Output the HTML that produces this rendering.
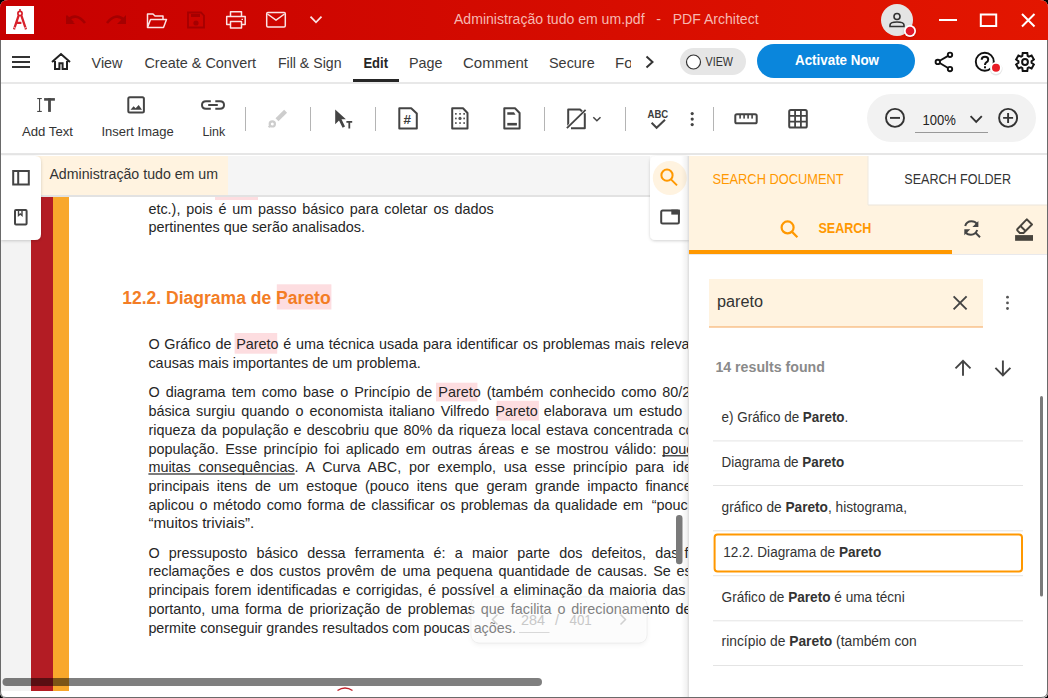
<!DOCTYPE html>
<html><head><meta charset="utf-8">
<style>
html,body{margin:0;padding:0;width:1048px;height:698px;overflow:hidden;background:#000;}
svg{display:block;}
text{font-family:"Liberation Sans",sans-serif;}
.ui{fill:#333;}
.doc{fill:#262626;font-size:15px;}
</style></head><body>
<svg width="1048" height="698" viewBox="0 0 1048 698">
<defs>
<linearGradient id="tg" x1="0" x2="1" y1="0" y2="0">
<stop offset="0" stop-color="#C60000"/><stop offset="1" stop-color="#E31600"/>
</linearGradient>
<linearGradient id="lsh" x1="0" x2="1" y1="0" y2="0"><stop offset="0" stop-color="#000" stop-opacity="0"/><stop offset="0.7" stop-color="#000" stop-opacity="0.05"/><stop offset="1" stop-color="#000" stop-opacity="0.14"/></linearGradient>
<clipPath id="win"><path d="M8 0H1040Q1048 0 1048 8V692Q1048 698 1042 698H6Q0 698 0 692V8Q0 0 8 0Z"/></clipPath>
<clipPath id="docclip"><rect x="1" y="196" width="687" height="495"/></clipPath>
<filter id="sh2" x="-20%" y="-30%" width="140%" height="170%"><feDropShadow dx="0" dy="2" stdDeviation="2" flood-color="#000" flood-opacity="0.12"/></filter>
<filter id="sh" x="-20%" y="-20%" width="140%" height="140%"><feDropShadow dx="0" dy="1" stdDeviation="1.5" flood-color="#000" flood-opacity="0.18"/></filter>
</defs>
<g clip-path="url(#win)">
<!-- window bg -->
<rect x="0" y="0" width="1048" height="698" fill="#fff"/>
<!-- TITLE BAR -->
<rect x="0" y="0" width="1048" height="40" fill="url(#tg)"/>
<rect x="6" y="6" width="28" height="28" fill="#fff"/>
<!-- logo compass -->
<rect x="19.2" y="9" width="1.6" height="2.5" fill="#D8202A"/>
<circle cx="20" cy="13.4" r="2.1" fill="none" stroke="#D8202A" stroke-width="1.7"/>
<path d="M18.6 15.6L14 29.4M21.4 15.6L26 29.4M17.2 22.8H21.4" fill="none" stroke="#D8202A" stroke-width="2.3"/>
<path d="M13.6 27.4L16.2 28.3M26.4 27.4L23.8 28.3" stroke="#fff" stroke-width="0.7"/>
<!-- undo redo -->
<g fill="none" stroke="#A50000" stroke-width="2.6">
<path d="M68 20Q76 12 85 23"/><path d="M67 15V22H74" stroke-width="0" fill="#A50000"/>
<path d="M66 15L66 24L75 24Z" fill="#A50000" stroke="none"/>
<path d="M124 20Q116 12 107 23"/>
<path d="M126 15L126 24L117 24Z" fill="#A50000" stroke="none"/>
</g>
<!-- folder -->
<path d="M147.5 27.5V14H153L155 16H163V19.5M147.5 27.5L150.5 19.5H166.5L163.5 27.5Z" fill="none" stroke="#FBE3E3" stroke-width="1.5" stroke-linejoin="round"/>
<!-- save disabled -->
<g fill="none" stroke="#A50000" stroke-width="1.8"><path d="M188 12.5H201L204 15.5V27.5H188Z"/></g>
<rect x="191" y="14" width="9" height="3" fill="#A50000"/><circle cx="196" cy="23" r="2.6" fill="#A50000"/>
<!-- print -->
<g fill="none" stroke="#FBE3E3" stroke-width="1.5" stroke-linejoin="round">
<path d="M230.5 16V11.8H241.5V16"/><path d="M230.5 24.5H226.7V16.5H245.2V24.5H241.5"/><path d="M230.5 21.5H241.5V28H230.5Z"/>
</g>
<rect x="241.5" y="18.8" width="1.5" height="1.2" fill="#FBE3E3"/>
<!-- mail -->
<g fill="none" stroke="#FBE3E3" stroke-width="1.5" stroke-linejoin="round"><rect x="266.7" y="12.6" width="18.6" height="14.4" rx="1.2"/><path d="M267.5 14L276 20.2L284.5 14"/></g>
<path d="M310.5 16.6L316 22.3L321.5 16.6" fill="none" stroke="#FBE3E3" stroke-width="1.8"/>
<!-- title -->
<text x="454" y="24" font-size="14" fill="#F6B8B0" textLength="304.6" lengthAdjust="spacingAndGlyphs">Administração tudo em um.pdf&#160;&#160; -&#160;&#160; PDF Architect</text>
<!-- avatar -->
<circle cx="897" cy="20" r="16" fill="#E4E4E4"/>
<g fill="none" stroke="#333" stroke-width="1.6"><circle cx="897" cy="16.5" r="3"/><path d="M890 26.5V25Q890 22 897 22Q904 22 904 25V26.5Z"/></g>
<circle cx="910" cy="31" r="6" fill="#fff" filter="url(#sh)"/><circle cx="910" cy="31" r="4.3" fill="#E0192A"/>
<!-- window controls -->
<rect x="939" y="19" width="18" height="2" fill="#fff"/>
<rect x="980.8" y="14.5" width="15.4" height="11.5" fill="none" stroke="#fff" stroke-width="2"/>
<path d="M1022 14L1034.5 26.5M1034.5 14L1022 26.5" stroke="#fff" stroke-width="2"/>

<!-- MENU BAR -->
<rect x="0" y="40" width="1048" height="42" fill="#fff"/>
<rect x="0" y="82" width="1048" height="2" fill="#E8E8E8"/>
<!-- hamburger / home -->
<g fill="#333"><rect x="12" y="56" width="18" height="2"/><rect x="12" y="61" width="18" height="2"/><rect x="12" y="66" width="18" height="2"/></g>
<path d="M52 62L61 54L70 62M55 61V69H59.4V63.2H62.6V69H67V61" fill="none" stroke="#222" stroke-width="2" stroke-linejoin="miter"/>
<g font-size="15" fill="#3a3a3a">
<text x="91.6" y="67.7" textLength="30.9" lengthAdjust="spacingAndGlyphs">View</text>
<text x="144.4" y="67.7" textLength="111.6" lengthAdjust="spacingAndGlyphs">Create &amp; Convert</text>
<text x="277.9" y="67.7" textLength="63.6" lengthAdjust="spacingAndGlyphs">Fill &amp; Sign</text>
<text x="363.4" y="67.7" textLength="24.6" lengthAdjust="spacingAndGlyphs" font-weight="bold" fill="#262626">Edit</text>
<text x="409" y="67.7" textLength="33.5" lengthAdjust="spacingAndGlyphs">Page</text>
<text x="463" y="67.7" textLength="65" lengthAdjust="spacingAndGlyphs">Comment</text>
<text x="549" y="67.7" textLength="45.7" lengthAdjust="spacingAndGlyphs">Secure</text>
<clipPath id="foc"><rect x="600" y="40" width="31" height="40"/></clipPath>
<text x="615" y="67.7" clip-path="url(#foc)">Form</text>
</g>
<rect x="353" y="79" width="46" height="3" fill="#262626"/>
<path d="M646.5 56.5L652.5 62L646.5 67.5" fill="none" stroke="#333" stroke-width="2"/>
<!-- VIEW toggle -->
<rect x="680" y="48" width="66" height="27" rx="13.5" fill="#E6E6E6"/>
<circle cx="693.5" cy="62" r="7" fill="#fff" stroke="#333" stroke-width="1.2"/>
<text x="705.5" y="66" font-size="13" fill="#333" textLength="27.5" lengthAdjust="spacingAndGlyphs">VIEW</text>
<!-- Activate -->
<rect x="757" y="44" width="158" height="34" rx="17" fill="#0A86DC"/>
<text x="795" y="64.8" font-size="14" font-weight="bold" fill="#fff" textLength="84" lengthAdjust="spacingAndGlyphs">Activate Now</text>
<!-- share -->
<g fill="none" stroke="#111" stroke-width="1.9"><circle cx="950" cy="54.8" r="2.2"/><circle cx="937.8" cy="61.9" r="2.2"/><circle cx="950" cy="69.1" r="2.2"/><path d="M948.1 55.9L939.7 60.8M939.7 63L948.1 68"/></g>
<!-- help -->
<circle cx="984.8" cy="61.8" r="9" fill="none" stroke="#111" stroke-width="1.9"/>
<path d="M981.7 59.8Q981.7 56.7 985 56.7Q988.2 56.7 988.2 59.4Q988.2 61.3 986.3 62.4Q985 63.2 985 65" fill="none" stroke="#111" stroke-width="2"/><rect x="984" y="66.3" width="2" height="2" fill="#111"/>
<circle cx="996" cy="69" r="6.5" fill="#000" fill-opacity="0.1"/><circle cx="996" cy="68" r="6" fill="#fff"/><circle cx="996" cy="67.8" r="4" fill="#E81C24"/>
<!-- gear -->
<g transform="translate(1025,62)"><path d="M-2.69 -6.03 L-2.28 -8.91 L2.28 -8.91 L2.69 -6.03 L3.87 -5.34 L6.58 -6.43 L8.86 -2.49 L6.56 -0.68 L6.56 0.68 L8.86 2.49 L6.58 6.43 L3.87 5.34 L2.69 6.03 L2.28 8.91 L-2.28 8.91 L-2.69 6.03 L-3.87 5.34 L-6.58 6.43 L-8.86 2.49 L-6.56 0.68 L-6.56 -0.68 L-8.86 -2.49 L-6.58 -6.43 L-3.87 -5.34Z" fill="none" stroke="#111" stroke-width="2" stroke-linejoin="miter"/><circle r="2.9" fill="none" stroke="#111" stroke-width="2"/></g>



<!-- TOOLBAR -->
<rect x="0" y="84" width="1048" height="70" fill="#fff"/>
<rect x="0" y="153" width="1048" height="2" fill="#E6E6E6"/>
<g fill="#484848">
<rect x="37.2" y="98" width="4.6" height="1.1"/><rect x="37.2" y="110.9" width="4.6" height="1.1"/><rect x="39" y="98" width="1.1" height="14"/>
<rect x="44.1" y="98.1" width="10.8" height="2.6"/><rect x="48.1" y="98.1" width="2.8" height="13.8"/>
</g>
<g font-size="13" fill="#333">
<text x="22" y="135.8" textLength="51" lengthAdjust="spacingAndGlyphs">Add Text</text>
<text x="101.5" y="135.8" textLength="72.2" lengthAdjust="spacingAndGlyphs">Insert Image</text>
<text x="202.4" y="135.8" textLength="22.8" lengthAdjust="spacingAndGlyphs">Link</text>
</g>
<rect x="128.3" y="97.3" width="15.6" height="15.3" rx="1.5" fill="none" stroke="#444" stroke-width="2"/>
<path d="M130.5 109.7L133.6 106.2L135.6 108.3L138.7 105.1L142 109.7Z" fill="#444"/>
<g fill="none" stroke="#444" stroke-width="2"><path d="M210.8 101.2H206Q202 101.2 202 105Q202 108.8 206 108.8H210.8"/><path d="M215.3 101.2H220Q224 101.2 224 105Q224 108.8 220 108.8H215.3"/><path d="M208.2 105H217.8"/></g>
<!-- separators -->
<g fill="#B4B4B4"><rect x="245" y="107" width="1" height="24"/><rect x="310" y="107" width="1" height="24"/><rect x="375" y="107" width="1" height="24"/><rect x="544" y="107" width="1" height="24"/><rect x="625" y="107" width="1" height="24"/><rect x="713" y="107" width="1" height="24"/></g>
<!-- brush disabled -->
<path d="M285.6 111.2L277 119.8" stroke="#CDCDCD" stroke-width="4.2" stroke-linecap="butt"/>
<circle cx="272.3" cy="123.9" r="2.6" fill="none" stroke="#CDCDCD" stroke-width="2.2"/><path d="M268.6 127.2L271 125" stroke="#CDCDCD" stroke-width="2"/>
<!-- select text -->
<path d="M335.2 109.5V124.3L339 120.6L342.6 127.8L345 126.5L341.5 119.3H345.9Z" fill="#444"/>
<path d="M346.4 121H352.2V122.8H350.2V128.6H348.4V122.8H346.4Z" fill="#444"/>
<!-- page # -->
<path d="M399.3 108.3H411.2L416.8 113.6V128.4H399.3Z" fill="none" stroke="#444" stroke-width="2" stroke-linejoin="round"/>
<text x="403.2" y="124.2" font-size="13.5" font-weight="bold" font-style="italic" fill="#3c3c3c">#</text>
<!-- dotted page -->
<path d="M452.2 108.3H463L467.5 113V128.4H452.2Z" fill="none" stroke="#444" stroke-width="2" stroke-linejoin="round"/>
<g fill="#555"><rect x="455" y="113" width="1.7" height="1.7"/><rect x="459.2" y="113" width="1.7" height="1.7"/><rect x="463.3" y="113" width="1.7" height="1.7"/>
<rect x="455" y="117.6" width="1.7" height="1.7"/><circle cx="460" cy="118.4" r="1.6"/><rect x="463.3" y="117.6" width="1.7" height="1.7"/>
<rect x="455" y="122.2" width="1.7" height="1.7"/><rect x="459.2" y="122.2" width="1.7" height="1.7"/><rect x="463.3" y="122.2" width="1.7" height="1.7"/></g>
<g fill="#ccc"><rect x="459.3" y="110.5" width="1" height="1"/><rect x="459.3" y="125.5" width="1" height="1"/></g>
<!-- header footer page -->
<path d="M504.3 108.3H515L519.6 113V128.4H504.3Z" fill="none" stroke="#444" stroke-width="2" stroke-linejoin="round"/>
<path d="M507.3 112.2H514L515.5 114.8H507.3Z" fill="#444"/><rect x="507.3" y="122.9" width="9.6" height="2.6" fill="#444"/>
<!-- no fill -->
<path d="M568.2 126V109.6H580L584.8 114V128.3H571" fill="none" stroke="#444" stroke-width="2" stroke-linejoin="round"/>
<path d="M566.7 128.3L585.8 109.7" stroke="#fff" stroke-width="3"/>
<path d="M566.9 128.1L585.6 109.9" stroke="#444" stroke-width="1.8"/>
<path d="M593.3 117.2L596.9 120.8L600.5 117.2" fill="none" stroke="#444" stroke-width="1.5"/>
<!-- ABC check -->
<text x="647.6" y="118.2" font-size="10.6" font-weight="bold" fill="#3c3c3c" textLength="20.6" lengthAdjust="spacingAndGlyphs">ABC</text>
<path d="M651.6 122.8L656.6 127.8L665 119.8" fill="none" stroke="#444" stroke-width="2"/>
<g fill="#444"><circle cx="692.2" cy="113.6" r="1.6"/><circle cx="692.2" cy="119.1" r="1.6"/><circle cx="692.2" cy="124.6" r="1.6"/></g>
<!-- ruler -->
<rect x="735.3" y="114.2" width="21.4" height="9.1" rx="1.6" fill="none" stroke="#444" stroke-width="2"/>
<g fill="#444"><rect x="739.3" y="114" width="1.6" height="4.6"/><rect x="743.3" y="114" width="1.6" height="4.6"/><rect x="747.3" y="114" width="1.6" height="4.6"/><rect x="751.3" y="114" width="1.6" height="4.6"/></g>
<!-- grid -->
<rect x="789.2" y="110" width="17.6" height="17.6" rx="1.6" fill="none" stroke="#444" stroke-width="2"/>
<path d="M795.1 110V127.6M800.9 110V127.6M789.2 115.9H806.8M789.2 121.7H806.8" stroke="#444" stroke-width="1.8"/>
<!-- zoom pill -->
<rect x="867" y="94" width="169" height="48" rx="24" fill="#F2F2F2"/>
<g fill="none" stroke="#333" stroke-width="1.9"><circle cx="895" cy="117.9" r="9"/><path d="M890 117.9H900"/><circle cx="1008.1" cy="117.9" r="9"/><path d="M1003.1 117.9H1013.1M1008.1 112.9V122.9"/></g>
<text x="922.6" y="125.1" font-size="14" fill="#222" textLength="33.3" lengthAdjust="spacingAndGlyphs">100%</text>
<path d="M970.6 116.2L976.2 121.8L981.8 116.2" fill="none" stroke="#333" stroke-width="1.9"/>
<rect x="915" y="132" width="73" height="1" fill="#999"/>


<!-- DOC VIEWPORT -->
<rect x="1" y="156" width="688" height="535" fill="#F3F3F3"/>
<rect x="31" y="156" width="658" height="535" fill="#fff"/>
<rect x="31" y="156" width="22" height="535" fill="#B31C24"/>
<rect x="53" y="156" width="16" height="535" fill="#F9A82C"/>
<!-- title bar -->
<rect x="1" y="156" width="649" height="39" fill="#F5F5F5"/>
<rect x="1" y="156" width="227" height="39" fill="#FFF3E0"/>
<rect x="1" y="195" width="649" height="2" fill="#E2E2E2"/>
<rect x="215" y="197" width="43" height="3" fill="#FDDDE0"/>
<text x="49.4" y="178.6" font-size="14" fill="#333" textLength="168.7" lengthAdjust="spacingAndGlyphs">Administração tudo em um</text>
<!-- left panel -->
<path d="M1 156H35Q41 156 41 162V234Q41 240 35 240H1Z" fill="#fff" filter="url(#sh)"/>
<g fill="none" stroke="#444" stroke-width="2"><rect x="13.2" y="171" width="15.6" height="13.5"/><path d="M18.2 171V184.5"/>
<rect x="15" y="210" width="11.6" height="14.5" rx="1"/><path d="M18.5 210V215.5L20.3 214L22 215.5V210" stroke-width="1.4"/></g>
<g clip-path="url(#docclip)">
<g fill="#FDDDE0"><rect x="276.8" y="284.3" width="54.6" height="25.2"/><rect x="234.6" y="333" width="42.6" height="20.7"/><rect x="436" y="382.7" width="41.4" height="18.7"/><rect x="496.7" y="400.8" width="42.2" height="19.8"/></g>
<text x="122.2" y="303.6" font-size="18" font-weight="bold" fill="#F37D25" textLength="208.4" lengthAdjust="spacingAndGlyphs">12.2. Diagrama de Pareto</text>
<g font-size="14.4" fill="#262626">
<text x="148.4" y="213.7" word-spacing="1.83">etc.), pois é um passo básico para coletar os dados</text>
<text x="148.4" y="232.0" textLength="216.6" lengthAdjust="spacingAndGlyphs">pertinentes que serão analisados.</text>
<text x="148.4" y="349.2" word-spacing="0.72">O Gráfico de Pareto é uma técnica usada para identificar os problemas mais</text>
<text x="650.4" y="349.2">relevantes</text>
<text x="148.4" y="368.1" textLength="272.3" lengthAdjust="spacingAndGlyphs">causas mais importantes de um problema.</text>
<text x="148.4" y="397.3" word-spacing="2.05">O diagrama tem como base o Princípio de Pareto (também conhecido como</text>
<text x="662.2" y="397.3">80/20)</text>
<text x="148.4" y="416.2" word-spacing="2.06">básica surgiu quando o economista italiano Vilfredo Pareto elaborava um estudo</text>
<text x="148.4" y="435.0" word-spacing="1.19">riqueza da população e descobriu que 80% da riqueza local estava concentrada</text>
<text x="678.4" y="435.0">com</text>
<text x="148.4" y="454.0" word-spacing="2.34">população. Esse princípio foi aplicado em outras áreas e se mostrou válido:</text>
<text x="662.2" y="454.0">poucas</text>
<text x="148.4" y="472.2" word-spacing="3.81">muitas consequências. A Curva ABC, por exemplo, usa esse princípio para</text>
<text x="672.7" y="472.2">identificar</text>
<text x="148.4" y="490.7" word-spacing="3.66">principais itens de um estoque (pouco itens que geram grande impacto</text>
<text x="645.4" y="490.7">financeiro</text>
<text x="148.4" y="509.6" word-spacing="1.55">aplicou o método como forma de classificar os problemas da qualidade em</text>
<text x="651.7" y="509.6">“poucos</text>
<text x="148.4" y="527.9" textLength="105.8" lengthAdjust="spacingAndGlyphs">“muitos triviais”.</text>
<text x="148.4" y="558.0" word-spacing="5.20">O pressuposto básico dessa ferramenta é: a maior parte dos defeitos, das</text>
<text x="684.5" y="558.0">falhas</text>
<text x="148.4" y="576.3" word-spacing="1.96">reclamações e dos custos provêm de uma pequena quantidade de causas. Se</text>
<text x="676.5" y="576.3">estas</text>
<text x="148.4" y="594.9" word-spacing="1.54">principais forem identificadas e corrigidas, é possível a eliminação da maioria</text>
<text x="662.2" y="594.9">das</text>
<text x="148.4" y="613.7" word-spacing="1.90">portanto, uma forma de priorização de problemas que facilita o direcionamento</text>
<text x="675.6" y="613.7">de</text>
<text x="148.4" y="632.6" textLength="367.5" lengthAdjust="spacingAndGlyphs">permite conseguir grandes resultados com poucas ações.</text>
</g>
<rect x="148.4" y="473.4" width="146.3" height="1.2" fill="#262626"/><rect x="662.2" y="455.2" width="30" height="1.2" fill="#262626"/>
</g>
<!-- page nav overlay -->
<rect x="471" y="597" width="176" height="46" rx="8" fill="#fff" fill-opacity="0.4" stroke="#000" stroke-opacity="0.05" stroke-width="1" filter="url(#sh2)"/>
<g font-size="15" fill="#C8C8C8"><text x="521" y="625" textLength="24" lengthAdjust="spacingAndGlyphs">284</text><text x="555" y="625" textLength="4" lengthAdjust="spacingAndGlyphs">/</text><text x="569.5" y="625" textLength="22.3" lengthAdjust="spacingAndGlyphs">401</text></g>
<rect x="519" y="632" width="30.5" height="1" fill="#D8D8D8"/>
<path d="M497.5 614.5L492.5 619.5L497.5 624.5M620.5 614.5L625.5 619.5L620.5 624.5" fill="none" stroke="#D0D0D0" stroke-width="1.5"/>
<!-- scrollbars -->
<rect x="676" y="515" width="6.5" height="49.3" rx="3.2" fill="#7A7A7A"/>
<rect x="2.5" y="678" width="539.5" height="8" rx="4" fill="#000" fill-opacity="0.5"/>
<path d="M337.5 690.5Q345 685.5 352.5 690.5" fill="none" stroke="#C0202A" stroke-width="1.5"/>

<!-- right floating panel -->
<path d="M689 156H656Q650 156 650 162V234Q650 240 656 240H689Z" fill="#fff" filter="url(#sh)"/>
<circle cx="669.8" cy="178" r="17" fill="#FFF3E0"/>
<g fill="none" stroke="#FF9800" stroke-width="2"><circle cx="667" cy="175.2" r="5.6"/><path d="M671 179.4L677 185.4"/></g>
<rect x="661.2" y="210.4" width="17.7" height="13" rx="1.5" fill="none" stroke="#444" stroke-width="2"/>
<rect x="671.3" y="209.6" width="8.6" height="5" fill="#444"/>


<!-- SEARCH PANEL -->
<rect x="681" y="156" width="8" height="541" fill="url(#lsh)"/>
<rect x="689" y="156" width="358" height="541" fill="#fff"/>
<rect x="689" y="156" width="358" height="98" fill="#FFF3E0"/>
<rect x="868" y="156" width="179" height="49" fill="#fff"/>
<rect x="868" y="204.5" width="179" height="1" fill="#ECE6DC"/>
<rect x="867.5" y="156" width="1" height="49" fill="#F0EADF"/>
<text x="712.4" y="184.4" font-size="14" fill="#FF9800" textLength="131.3" lengthAdjust="spacingAndGlyphs">SEARCH DOCUMENT</text>
<text x="904.3" y="184.2" font-size="14" fill="#333" textLength="106.7" lengthAdjust="spacingAndGlyphs">SEARCH FOLDER</text>
<g fill="none" stroke="#FF9800" stroke-width="2.2"><circle cx="787.6" cy="227.4" r="6"/><path d="M791.8 231.6L797.4 237.2"/></g>
<text x="818.4" y="233" font-size="14" font-weight="bold" fill="#FF9800" textLength="53" lengthAdjust="spacingAndGlyphs">SEARCH</text>
<rect x="689" y="254" width="358" height="1" fill="#E9E9EC"/>
<rect x="689" y="250" width="263" height="4" fill="#FF9800"/>
<!-- refresh search -->
<g fill="none" stroke="#444" stroke-width="2"><path d="M965.2 226Q966.5 221.2 971.5 221.2Q975 221.2 977 223.8"/><path d="M977.2 230Q975.5 234.8 971 234.8Q967 234.8 965.5 232"/><path d="M975.5 232.8L980 237.3"/></g>
<path d="M978.4 221V227H972.4Z" fill="#444"/><path d="M964.3 235.3V229.3H970.3Z" fill="#444"/>
<!-- eraser -->
<path d="M1026.7 219.3L1032 224.5L1023.5 233H1019.8L1017.5 230.7Q1016.8 229.8 1017.5 229Z" fill="none" stroke="#48443D" stroke-width="1.9" stroke-linejoin="round"/>
<path d="M1020.2 225.8L1025.8 231.3" stroke="#48443D" stroke-width="1.9"/>
<rect x="1015.1" y="235.1" width="17.9" height="5.7" fill="#48443D"/>
<!-- input -->
<rect x="709" y="279" width="274" height="48" fill="#FFF3E0"/>
<rect x="709" y="326.5" width="274" height="1" fill="#F5A55B"/>
<text x="717" y="307" font-size="16" fill="#333" textLength="46" lengthAdjust="spacingAndGlyphs">pareto</text>
<path d="M953.6 296.4L966.6 309.4M966.6 296.4L953.6 309.4" stroke="#444" stroke-width="1.9"/>
<g fill="#555"><circle cx="1007.5" cy="297.2" r="1.4"/><circle cx="1007.5" cy="302.9" r="1.4"/><circle cx="1007.5" cy="308.5" r="1.4"/></g>
<text x="715.4" y="372.1" font-size="14" font-weight="bold" fill="#8A8A8A" textLength="109.5" lengthAdjust="spacingAndGlyphs">14 results found</text>
<g fill="none" stroke="#444" stroke-width="1.9"><path d="M963 375.7V361.5M955.5 368.3L963 360.8L970.5 368.3"/><path d="M1002.9 360.4V374.6M995.4 367.8L1002.9 375.3L1010.4 367.8"/></g>
<!-- results -->
<g fill="#E4E4E4"><rect x="713" y="440.4" width="310" height="1"/><rect x="713" y="485" width="310" height="1"/><rect x="713" y="530.3" width="310" height="1"/><rect x="713" y="575.2" width="310" height="1"/><rect x="713" y="620.3" width="310" height="1"/><rect x="713" y="665" width="310" height="1"/></g>
<rect x="714.6" y="534.4" width="307.4" height="37" rx="3" fill="none" stroke="#FF9800" stroke-width="2"/>
<g font-size="14" fill="#333">
<text x="721.6" y="422.2" textLength="126.7" lengthAdjust="spacingAndGlyphs">e) Gráfico de <tspan font-weight="bold">Pareto</tspan>.</text>
<text x="721.6" y="467.1" textLength="122.6" lengthAdjust="spacingAndGlyphs">Diagrama de <tspan font-weight="bold">Pareto</tspan></text>
<text x="721.6" y="512.0" textLength="185.4" lengthAdjust="spacingAndGlyphs">gráfico de <tspan font-weight="bold">Pareto</tspan>, histograma,</text>
<text x="723.3" y="556.6" textLength="157.9" lengthAdjust="spacingAndGlyphs">12.2. Diagrama de <tspan font-weight="bold">Pareto</tspan></text>
<text x="721.6" y="601.5" textLength="183.1" lengthAdjust="spacingAndGlyphs">Gráfico de <tspan font-weight="bold">Pareto</tspan> é uma técni</text>
<text x="721.6" y="646.4" textLength="195.1" lengthAdjust="spacingAndGlyphs">rincípio de <tspan font-weight="bold">Pareto</tspan> (também con</text>
</g>
<rect x="1040" y="396" width="3" height="200.4" rx="1.5" fill="#7A7A7A"/>

</g>
<!-- window border -->
<path d="M0.5 40V691Q0.5 697.5 6 697.5H1041Q1047.5 697.5 1047.5 691V40" fill="none" stroke="#6a6a6a" stroke-width="1"/>
</svg>
</body></html>
